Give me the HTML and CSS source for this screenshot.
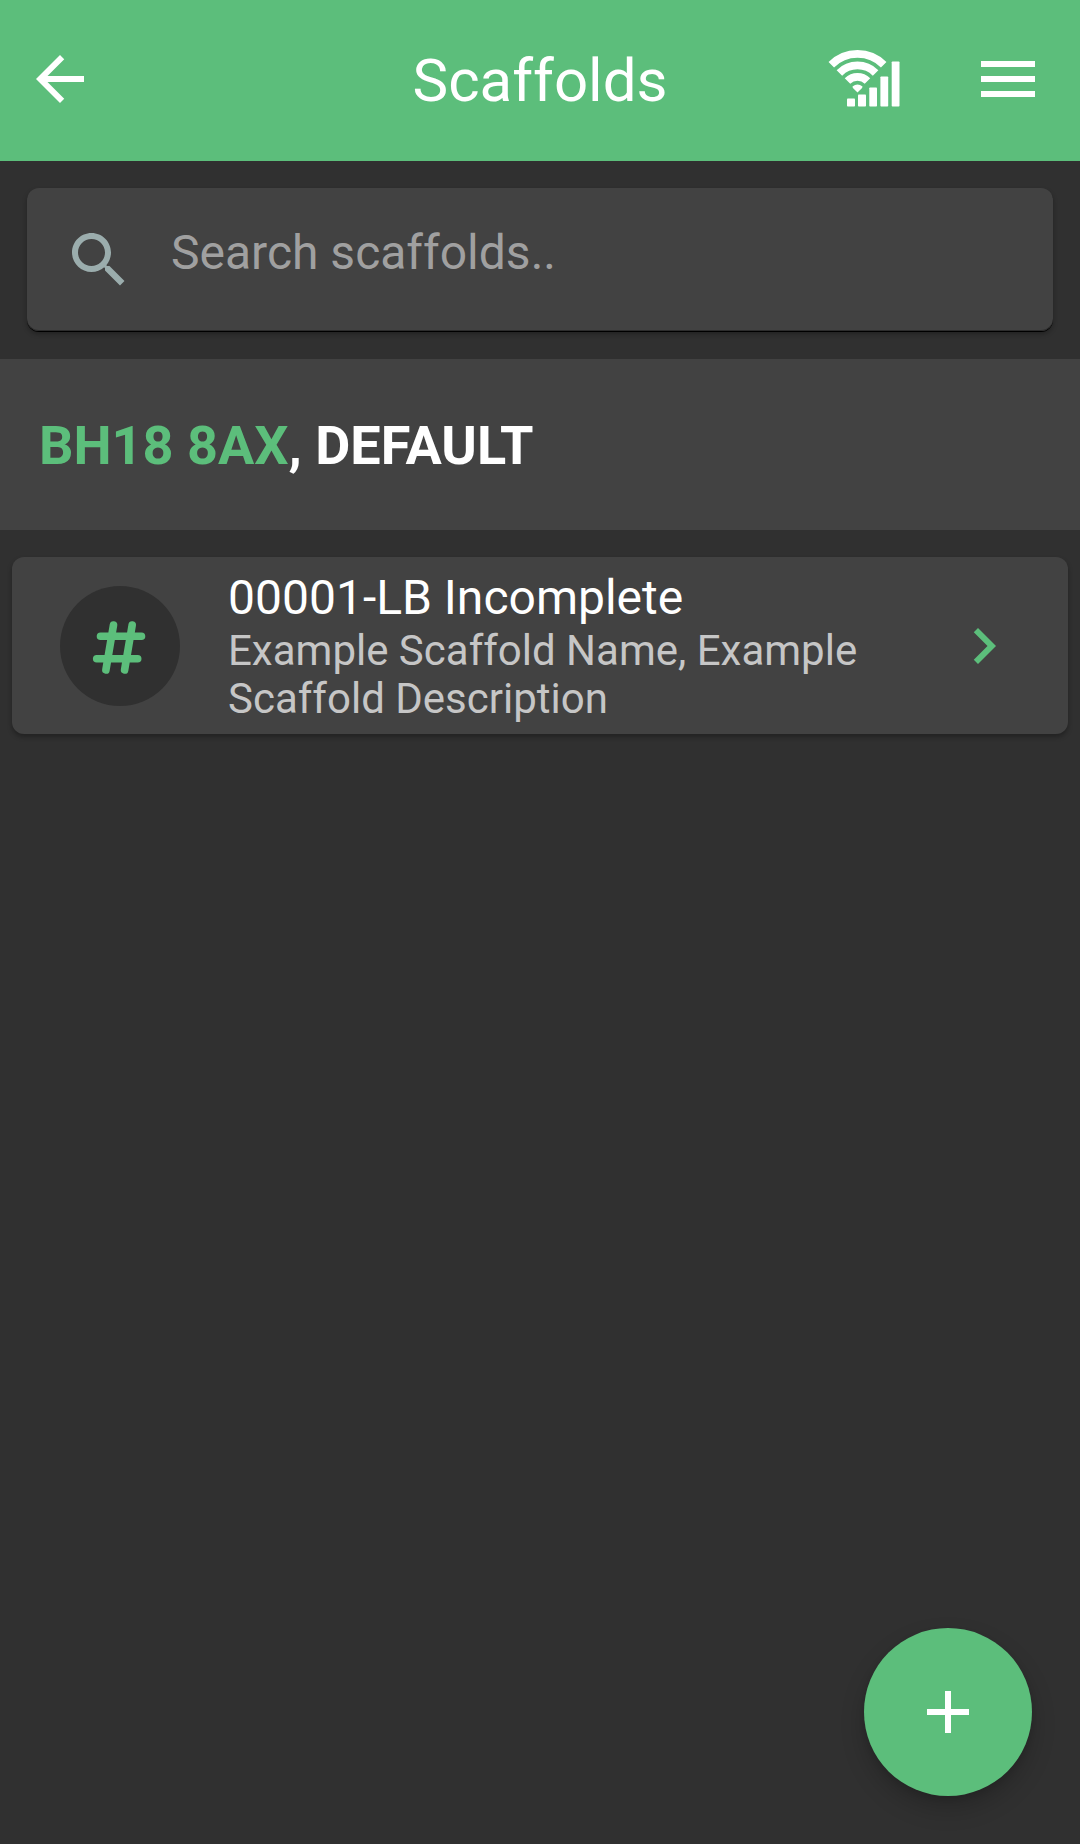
FILE: index.html
```html
<!DOCTYPE html>
<html lang="en">
<head>
    <meta charset="UTF-8">
    <title>Scaffolds</title>
    <link rel="stylesheet" href="styles.css">
</head>
<body>
    <header class="app-bar">
        <button class="icon-button" aria-label="Back">
            <svg class="icon" viewBox="0 0 24 24"><path d="M20 11H7.83l5.59-5.59L12 4l-8 8 8 8 1.41-1.41L7.83 13H20v-2z"/></svg>
        </button>
        <h1>Scaffolds</h1>
        <div class="actions">
            <svg class="signal" viewBox="0 0 72 58">
                <g fill="none" stroke="#fff" stroke-width="7.8">
                    <path d="M3.3 16.8a37 37 0 0 1 52.4 0"/>
                    <path d="M11.4 24.9a25.6 25.6 0 0 1 36.2 0"/>
                    <path d="M19.5 33a14.2 14.2 0 0 1 20 0"/>
                </g>
                <path d="M24.5 38.6q5-4.4 10 0l-.4 1.4-4.6 4.4-4.6-4.4z"/>
                <rect x="19" y="50.5" width="8" height="8" rx=".8"/>
                <rect x="30" y="46.5" width="8" height="12" rx=".8"/>
                <rect x="41.3" y="39.5" width="7.7" height="19" rx=".8"/>
                <rect x="52.4" y="28.5" width="7.8" height="30" rx=".8"/>
                <rect x="63.7" y="13.5" width="7.8" height="45" rx=".8"/>
            </svg>
            <button class="icon-button" aria-label="Menu">
                <svg class="icon" viewBox="0 0 24 24"><path d="M3 18h18v-2H3v2zm0-5h18v-2H3v2zm0-7v2h18V6H3z"/></svg>
            </button>
        </div>
    </header>

    <main>
        <label class="search">
            <svg class="icon" viewBox="0 0 24 24"><path d="M15.5 14h-.79l-.28-.27C15.41 12.59 16 11.11 16 9.5 16 5.91 13.09 3 9.5 3S3 5.91 3 9.5 5.91 16 9.5 16c1.61 0 3.09-.59 4.23-1.57l.27.28v.79l5 4.99L20.49 19l-4.99-5zm-6 0C7.01 14 5 11.99 5 9.5S7.01 5 9.5 5 14 7.01 14 9.5 11.99 14 9.5 14z"/></svg>
            <input type="text" placeholder="Search scaffolds..">
        </label>

        <h2 class="location"><span>BH18 8AX</span>, DEFAULT</h2>

        <div class="card">
            <div class="avatar">
                <svg viewBox="0 0 54 54"><path d="M7.5 17.2h41M3.7 39.7h41M20.5 6l-7.6 45M39.2 6l-7.6 45"/></svg>
            </div>
            <div class="details">
                <h3>00001-LB Incomplete</h3>
                <p>Example Scaffold Name, Example Scaffold Description</p>
            </div>
            <svg class="icon" viewBox="0 0 24 24"><path d="M10 6L8.59 7.41 13.17 12l-4.58 4.59L10 18l6-6z"/></svg>
        </div>
    </main>

    <button class="fab" aria-label="Add scaffold">
        <svg class="icon" viewBox="0 0 24 24"><path d="M19 13h-6v6h-2v-6H5v-2h6V5h2v6h6v2z"/></svg>
    </button>
</body>
</html>
```
FILE: styles.css
```css
* {
    box-sizing: border-box;
}

body {
    margin: 0;
    min-height: 1844px;
    background-color: #303030;
    color: white;
    font-family: Roboto, sans-serif;
}

h1, h2, h3, p {
    margin: 0;
}

button {
    display: flex;
    padding: 0;
    border: none;
    background: none;
    color: white;
}

.icon {
    display: block;
    flex: none;
    width: 72px;
    height: 72px;
    fill: currentColor;
}

.app-bar {
    display: grid;
    grid-template-columns: 1fr auto 1fr;
    align-items: center;
    height: 161px;
    padding: 0 36px 3px 24px;
    background-color: #5cbe7b;
}

.app-bar h1 {
    padding: 4px 0 0 12px;
    font-size: 60px;
    font-weight: 400;
    line-height: 70px;
}

.actions {
    display: flex;
    align-items: center;
    justify-content: flex-end;
    gap: 72px;
}

.signal {
    width: 72px;
    height: 58px;
    margin-bottom: 4px;
    overflow: visible;
    fill: white;
}

.search {
    display: flex;
    align-items: center;
    gap: 36px;
    height: 143px;
    margin: 27px 27px 28px;
    padding: 1px 36px 0;
    border-radius: 12px;
    background-color: #424242;
    color: #9badad;
    box-shadow: inset 0 -1px 0 #2c2c2c, 0 1px 0 #000, 0 3px 5px rgba(0, 0, 0, 0.3);
}

.search input {
    flex: 1;
    min-width: 0;
    padding: 0 0 14px;
    border: none;
    outline: none;
    background: none;
    color: white;
    font: 400 48px/56px Roboto, sans-serif;
}

.search input::placeholder {
    color: #a0a0a0;
    opacity: 1;
}

.location {
    height: 171px;
    padding: 55px 39px;
    background-color: #424242;
    font-size: 54px;
    font-weight: 700;
    line-height: 63px;
}

.location span {
    color: #5cbe7b;
}

.card {
    display: flex;
    align-items: center;
    height: 177px;
    margin: 27px 12px;
    padding: 0 48px;
    border-radius: 12px;
    background-color: #424242;
    box-shadow: 0 3px 5px rgba(0, 0, 0, 0.3);
}

.card .icon {
    color: #5cbe7b;
}

.avatar {
    display: flex;
    align-items: center;
    justify-content: center;
    flex: none;
    width: 120px;
    height: 120px;
    border-radius: 50%;
    background-color: #303030;
}

.avatar svg {
    width: 54px;
    height: 54px;
    overflow: visible;
    fill: none;
    stroke: #5cbe7b;
    stroke-width: 7.6;
    stroke-linecap: round;
}

.details {
    flex: 1;
    padding: 0 72px 0 48px;
}

.details h3 {
    margin-bottom: 1px;
    font-size: 48px;
    font-weight: 400;
    line-height: 57px;
}

.details p {
    color: #c6c6c6;
    font-size: 42px;
    line-height: 48px;
}

.fab {
    position: fixed;
    right: 48px;
    bottom: 48px;
    align-items: center;
    justify-content: center;
    width: 168px;
    height: 168px;
    border-radius: 50%;
    background-color: #5cbe7b;
    box-shadow: 0 12px 24px rgba(0, 0, 0, 0.2), 0 3px 8px rgba(0, 0, 0, 0.12);
}
```
